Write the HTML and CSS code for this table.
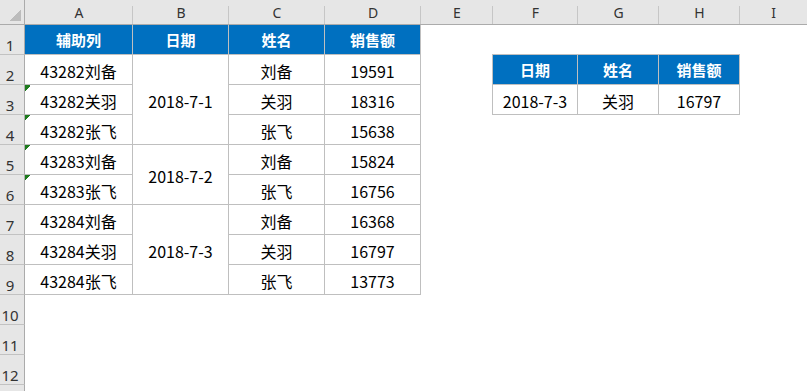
FILE: index.html
```html
<!DOCTYPE html>
<html lang="zh-CN">
<head>
<meta charset="utf-8">
<title>Sheet</title>
<link rel="stylesheet" href="styles.css">
</head>
<body>
<div class="sheet">
  <div class="corner"><span class="corner-tri"></span></div>
  <div class="colhead">A</div>
  <div class="colhead">B</div>
  <div class="colhead">C</div>
  <div class="colhead">D</div>
  <div class="colhead">E</div>
  <div class="colhead">F</div>
  <div class="colhead">G</div>
  <div class="colhead">H</div>
  <div class="colhead last">I</div>

  <div class="rowhead r1">1</div>
  <div class="rowhead r2">2</div>
  <div class="rowhead r3">3</div>
  <div class="rowhead r4">4</div>
  <div class="rowhead r5">5</div>
  <div class="rowhead r6">6</div>
  <div class="rowhead r7">7</div>
  <div class="rowhead r8">8</div>
  <div class="rowhead r9">9</div>
  <div class="rowhead r10">10</div>
  <div class="rowhead r11">11</div>
  <div class="rowhead r12">12</div>
  <div class="rowhead r13"></div>

  <div class="table-left">
    <div class="cell head">辅助列</div>
    <div class="cell head">日期</div>
    <div class="cell head">姓名</div>
    <div class="cell head">销售额</div>

    <div class="cell">43282刘备</div>
    <div class="cell span3">2018-7-1</div>
    <div class="cell">刘备</div>
    <div class="cell">19591</div>

    <div class="cell warn">43282关羽</div>
    <div class="cell">关羽</div>
    <div class="cell">18316</div>

    <div class="cell warn">43282张飞</div>
    <div class="cell">张飞</div>
    <div class="cell">15638</div>

    <div class="cell warn">43283刘备</div>
    <div class="cell span2">2018-7-2</div>
    <div class="cell">刘备</div>
    <div class="cell">15824</div>

    <div class="cell warn">43283张飞</div>
    <div class="cell">张飞</div>
    <div class="cell">16756</div>

    <div class="cell">43284刘备</div>
    <div class="cell span3">2018-7-3</div>
    <div class="cell">刘备</div>
    <div class="cell">16368</div>

    <div class="cell">43284关羽</div>
    <div class="cell">关羽</div>
    <div class="cell">16797</div>

    <div class="cell">43284张飞</div>
    <div class="cell">张飞</div>
    <div class="cell">13773</div>
  </div>

  <div class="table-right">
    <div class="cell head">日期</div>
    <div class="cell head">姓名</div>
    <div class="cell head">销售额</div>
    <div class="cell">2018-7-3</div>
    <div class="cell">关羽</div>
    <div class="cell">16797</div>
  </div>
</div>
</body>
</html>
```

FILE: styles.css
```css
* { box-sizing: border-box; }

html, body {
  margin: 0;
  padding: 0;
  background: #ffffff;
}

.sheet {
  width: 807px;
  height: 391px;
  overflow: hidden;
  display: grid;
  grid-template-columns: 25px 108px 96px 96px 96px 72px 85px 81px 81px 1fr;
  grid-template-rows: 25px repeat(13, 30px);
  font-family: "Noto Sans CJK SC", "Noto Sans", sans-serif;
  color: #000;
}

.corner {
  grid-column: 1;
  grid-row: 1;
  background: #e6e6e6;
  border-right: 1px solid #ababab;
  border-bottom: 1px solid #ababab;
  display: flex;
  justify-content: flex-end;
  align-items: flex-end;
  padding: 0 3px 3px 0;
}

.corner-tri {
  width: 11px;
  height: 11px;
  background: linear-gradient(to bottom right, transparent 50%, #bcbcbc 50%);
}

.colhead {
  grid-row: 1;
  background:
    linear-gradient(#c6c6c6, #c6c6c6) right bottom / 1px 18px no-repeat,
    #e6e6e6;
  border-bottom: 1px solid #ababab;
  display: flex;
  justify-content: center;
  align-items: flex-end;
  padding-bottom: 1px;
  font-family: "Noto Sans", "Noto Sans CJK SC", sans-serif;
  font-size: 14px;
  line-height: 20px;
  color: #333;
}

.colhead.last { background: #e6e6e6; }

.rowhead {
  grid-column: 1;
  background: #e6e6e6;
  border-right: 1px solid #ababab;
  border-bottom: 1px solid #c2c2c2;
  display: flex;
  justify-content: center;
  align-items: flex-end;
  padding-right: 4px;
  font-family: "Noto Sans", "Noto Sans CJK SC", sans-serif;
  font-size: 15px;
  line-height: 18px;
  color: #333;
}

.r1 { grid-row: 2; }
.r2 { grid-row: 3; }
.r3 { grid-row: 4; }
.r4 { grid-row: 5; }
.r5 { grid-row: 6; }
.r6 { grid-row: 7; }
.r7 { grid-row: 8; }
.r8 { grid-row: 9; }
.r9 { grid-row: 10; }
.r10 { grid-row: 11; }
.r11 { grid-row: 12; }
.r12 { grid-row: 13; }
.r13 { grid-row: 14; }

.table-left {
  grid-column: 2 / 6;
  grid-row: 2 / 11;
  display: grid;
  grid-template-columns: 108px 96px 96px 96px;
  grid-auto-rows: 30px;
}

.table-right {
  grid-column: 7 / 10;
  grid-row: 3 / 5;
  margin: -1px 0 0 -1px;
  border-left: 1px solid #bfbfbf;
  border-top: 1px solid #bfbfbf;
  display: grid;
  grid-template-columns: 85px 81px 81px;
  grid-auto-rows: 30px;
}

.cell {
  position: relative;
  border-right: 1px solid #bfbfbf;
  border-bottom: 1px solid #bfbfbf;
  display: flex;
  justify-content: center;
  align-items: center;
  padding-top: 2px;
  font-size: 16px;
  line-height: 20px;
  white-space: nowrap;
}

.cell.head {
  background: #0070c0;
  color: #ffffff;
  font-weight: bold;
  font-size: 15px;
  padding-top: 0;
}

.span3 { grid-row: span 3; }
.span2 { grid-row: span 2; }

.warn::before {
  content: "";
  position: absolute;
  left: 0;
  top: 0;
  width: 6px;
  height: 6px;
  background: linear-gradient(to bottom right, #1e7b1e 50%, transparent 50%);
}
```
